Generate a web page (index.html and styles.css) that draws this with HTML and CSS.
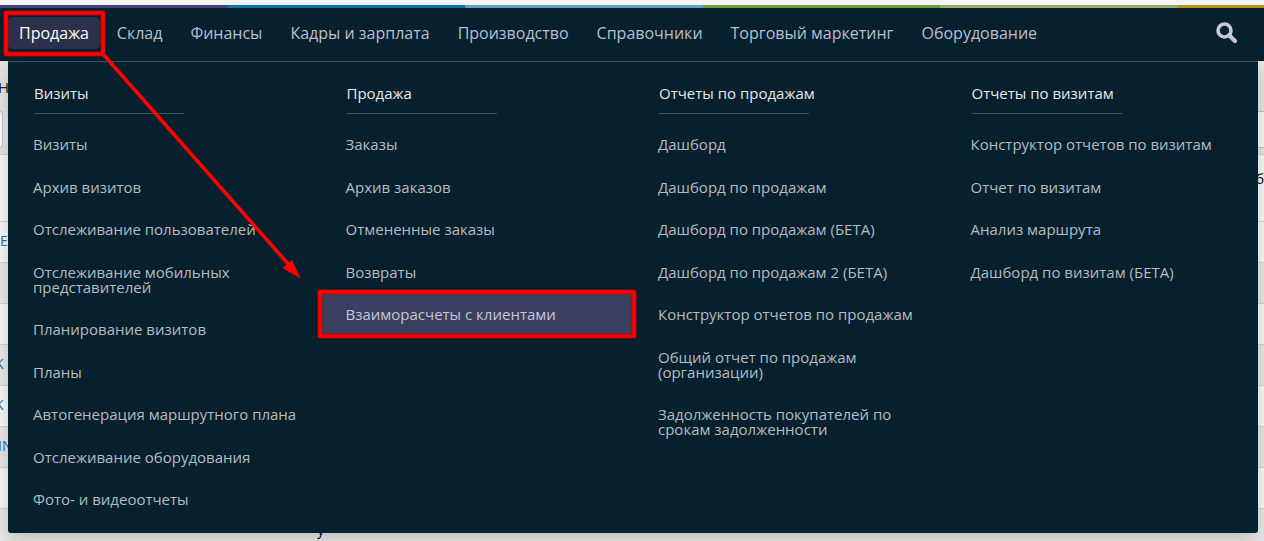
FILE: index.html
```html
<!DOCTYPE html>
<html lang="ru">
<head>
<meta charset="utf-8">
<title>Продажа</title>
<link rel="stylesheet" href="styles.css">
</head>
<body>
<div class="stripe"></div>
<header class="topbar">
  <nav class="nav">
    <a class="nav-link active" href="#">Продажа</a>
    <a class="nav-link" href="#">Склад</a>
    <a class="nav-link" href="#">Финансы</a>
    <a class="nav-link" href="#">Кадры и зарплата</a>
    <a class="nav-link" href="#">Производство</a>
    <a class="nav-link" href="#">Справочники</a>
    <a class="nav-link" href="#">Торговый маркетинг</a>
    <a class="nav-link" href="#">Оборудование</a>
  </nav>
  <button class="search" type="button" aria-label="Поиск">
    <svg width="22" height="22" viewBox="0 0 22 22"><circle cx="8.5" cy="8.5" r="6.5" fill="none" stroke="currentColor" stroke-width="3.6"/><path d="M13.4 13.4L19 19" stroke="currentColor" stroke-width="4.2" stroke-linecap="round"/></svg>
  </button>
  <div class="menu">
    <section class="col">
      <h2>Визиты</h2>
      <ul>
        <li><a href="#">Визиты</a></li>
        <li><a href="#">Архив визитов</a></li>
        <li><a href="#">Отслеживание пользователей</a></li>
        <li><a href="#">Отслеживание мобильных представителей</a></li>
        <li><a href="#">Планирование визитов</a></li>
        <li><a href="#">Планы</a></li>
        <li><a href="#">Автогенерация маршрутного плана</a></li>
        <li><a href="#">Отслеживание оборудования</a></li>
        <li><a href="#">Фото- и видеоотчеты</a></li>
      </ul>
    </section>
    <section class="col">
      <h2>Продажа</h2>
      <ul>
        <li><a href="#">Заказы</a></li>
        <li><a href="#">Архив заказов</a></li>
        <li><a href="#">Отмененные заказы</a></li>
        <li><a href="#">Возвраты</a></li>
        <li><a class="current" href="#">Взаиморасчеты с клиентами</a></li>
      </ul>
    </section>
    <section class="col">
      <h2>Отчеты по продажам</h2>
      <ul>
        <li><a href="#">Дашборд</a></li>
        <li><a href="#">Дашборд по продажам</a></li>
        <li><a href="#">Дашборд по продажам (БЕТА)</a></li>
        <li><a href="#">Дашборд по продажам 2 (БЕТА)</a></li>
        <li><a href="#">Конструктор отчетов по продажам</a></li>
        <li><a href="#">Общий отчет по продажам (организации)</a></li>
        <li><a href="#">Задолженность покупателей по срокам задолженности</a></li>
      </ul>
    </section>
    <section class="col">
      <h2>Отчеты по визитам</h2>
      <ul>
        <li><a href="#">Конструктор отчетов по визитам</a></li>
        <li><a href="#">Отчет по визитам</a></li>
        <li><a href="#">Анализ маршрута</a></li>
        <li><a href="#">Дашборд по визитам (БЕТА)</a></li>
      </ul>
    </section>
  </div>
</header>
<main class="page">
  <div class="title">Н</div>
  <div class="filters"><span class="field"></span><span class="panel"></span></div>
  <table class="grid">
    <tbody>
      <tr class="head"><td></td><td></td><td class="end">б</td></tr>
      <tr><td class="name">E</td><td></td><td></td></tr>
      <tr><td></td><td></td><td></td></tr>
      <tr><td></td><td></td><td></td></tr>
      <tr><td class="name cut">K</td><td></td><td></td></tr>
      <tr><td class="name cut">K</td><td></td><td></td></tr>
      <tr><td class="name in">IN</td><td></td><td></td></tr>
      <tr><td></td><td></td><td></td></tr>
      <tr><td></td><td class="low">у</td><td></td></tr>
    </tbody>
  </table>
</main>
<svg class="marks" width="640" height="345" viewBox="0 0 640 345" aria-hidden="true">
  <g fill="none" stroke="#a00710" stroke-width="5" stroke-linejoin="round">
    <rect x="6" y="13" width="97" height="41"/>
    <rect x="320" y="292" width="314" height="44"/>
  </g>
  <g fill="none" stroke="#fe0000" stroke-width="3.6" stroke-linejoin="round">
    <rect x="6" y="13" width="97" height="41"/>
    <rect x="320" y="292" width="314" height="44"/>
    <path d="M103 54L290 266"/>
  </g>
  <path d="M300.500 278.500L282.500 268L292 260Z" fill="#fe0000"/>
</svg>
</body>
</html>
```
FILE: styles.css
```css
* {
  box-sizing: border-box;
}

body {
  margin: 0;
  height: 100vh;
  overflow: hidden;
  position: relative;
  background: #e7e7e7;
  font-family: "Open Sans", "Noto Sans", sans-serif;
  font-size: 15px;
}

a {
  color: inherit;
  text-decoration: none;
}

.stripe {
  height: 8px;
  border-top: 5px solid #f4f4f4;
  background: linear-gradient(90deg, #42457b 18%, #0675ab 18% 36.8%, #619fc1 36.8% 55.6%, #749d38 55.6% 74.4%, #97ab70 74.4% 93.1%, #b4951a 93.1%);
}

.topbar {
  position: relative;
  z-index: 1;
  display: flex;
  align-items: center;
  justify-content: space-between;
  height: 53px;
  padding: 0 26px 4px 8px;
  background: #07202e;
  color: #b9bfd0;
}

.nav {
  display: flex;
  gap: 6px;
}

.nav-link {
  padding: 0 11px;
  border-radius: 5px;
  font-size: 16px;
  line-height: 32px;
  white-space: nowrap;
}

.nav-link.active {
  background: #2b304b;
  color: #fff;
}

.search {
  display: flex;
  padding: 0;
  border: 0;
  background: none;
  color: #c4c9da;
}

.menu {
  position: absolute;
  top: 100%;
  left: 8px;
  right: 6px;
  display: grid;
  grid-template-columns: repeat(4, 1fr);
  padding: 21px 0 12px;
  border-top: 1px solid #3e5360;
  border-radius: 0 0 3px 3px;
  background: #07202e;
  box-shadow: 0 6px 20px rgba(0, 0, 0, 0.2);
}

.col h2 {
  width: 150px;
  margin: 0 0 9px 26px;
  padding-bottom: 10px;
  border-bottom: 1px solid #3e5360;
  color: #e6e9eb;
  font-size: 15px;
  font-weight: 500;
  line-height: 20px;
  white-space: nowrap;
}

.col ul {
  margin: 0;
  padding: 0;
  list-style: none;
}

.col li a {
  display: block;
  padding: 14px 16px 14px 25px;
  color: #b5bcc1;
  line-height: 15px;
}

.col li:nth-child(even) a {
  padding-bottom: 13px;
}

.col li a.current {
  background: #3b4063;
  color: #c5c8d4;
}

.title {
  height: 50px;
  padding-top: 16px;
  color: #222;
  font-size: 15px;
  line-height: 20px;
  text-indent: -2px;
}

.filters {
  display: flex;
  justify-content: space-between;
  height: 43px;
  padding-bottom: 6px;
}

.field {
  width: 3px;
  border: 1px solid #bfc6cf;
  border-left: 0;
  border-radius: 0 4px 4px 0;
  background: #fff;
}

.panel {
  width: 40px;
  border: 1px solid #c4c4cc;
  border-right: 0;
  background: #fafafa;
}

.grid {
  width: 100%;
  table-layout: fixed;
  border-collapse: collapse;
}

.grid tr {
  height: 41px;
  background: #e9e9e9;
  border-top: 1px solid #d6d6d6;
}

.grid tr:nth-child(even),
.grid .head {
  background: #fafafa;
}

.grid .head {
  height: 67px;
}

.grid td {
  padding: 0;
  font-size: 14px;
  line-height: 20px;
  white-space: nowrap;
}

.grid .name {
  padding-bottom: 3px;
  color: #2f6f9f;
}

.grid .cut {
  text-indent: -5px;
}

.grid .in {
  text-indent: -2px;
}

.grid .end {
  padding-bottom: 18px;
  text-align: right;
}

.grid .low {
  padding-top: 2px;
  text-indent: -104px;
}

.marks {
  position: absolute;
  top: 0;
  left: 0;
  z-index: 2;
  pointer-events: none;
}
```
